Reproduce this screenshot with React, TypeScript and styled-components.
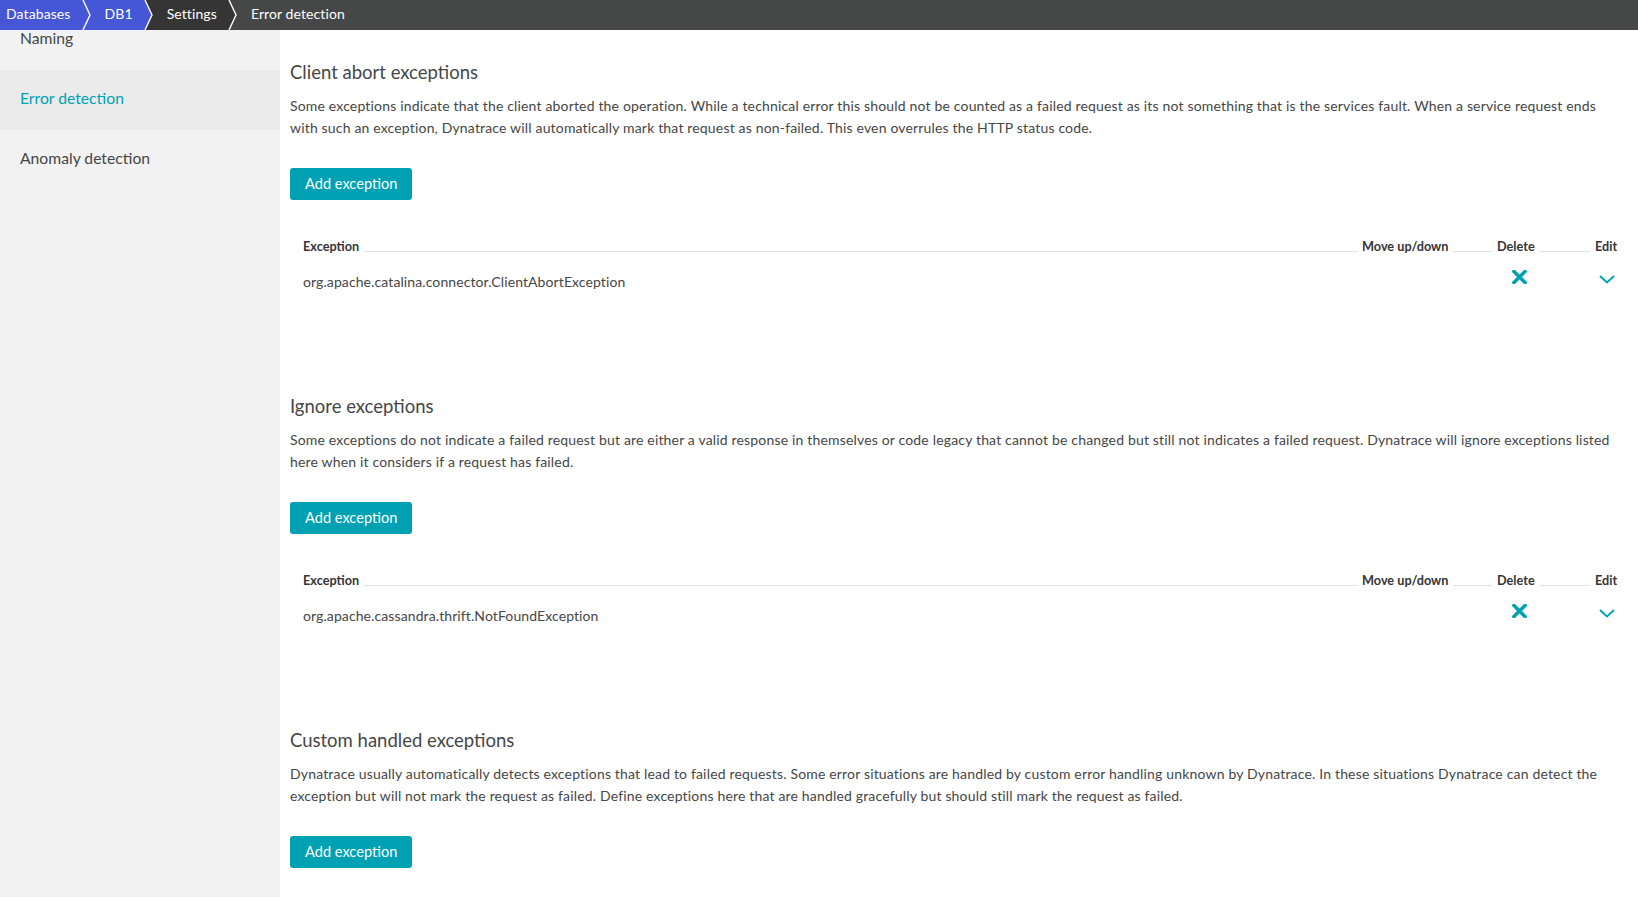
import React from "react";
import styled, { createGlobalStyle } from "styled-components";

const GlobalStyle = createGlobalStyle`
  html, body {
    margin: 0;
    padding: 0;
    height: 100%;
    overflow: hidden;
    background: #ffffff;
    font-family: Lato, "Noto Sans", "Liberation Sans", sans-serif;
    color: #454646;
  }
  * { box-sizing: border-box; }
`;

const TEAL = "#00a1b2";
const BLUE = "#4556d7";
const DARK = "#353535";
const GREY = "#464847";

const Page = styled.div`
  display: flex;
  flex-direction: column;
  height: 100vh;
  overflow: hidden;
`;

const Breadcrumbs = styled.nav`
  display: flex;
  align-items: stretch;
  height: 30px;
  flex-shrink: 0;
  background: ${GREY};
`;

const Crumb = styled.a<{ $bg: string; $first?: boolean }>`
  display: flex;
  align-items: center;
  background: ${(p) => p.$bg};
  color: #ffffff;
  font-size: 14px;
  letter-spacing: 0.1px;
  padding: 0 10px 3px ${(p) => (p.$first ? "6px" : "10px")};
  text-decoration: none;
  white-space: nowrap;
`;

const SepSvg = styled.svg`
  display: block;
  flex-shrink: 0;
`;

function Separator({ left, right }: { left: string; right: string }) {
  return (
    <SepSvg width="14" height="30" viewBox="0 0 14 30">
      <rect x="0" y="0" width="14" height="30" fill={left} />
      <polygon points="2,0 14,0 14,30 2,30 9,15" fill={right} />
      <polyline points="2,0 9,15 2,30" fill="none" stroke="#ffffff" strokeWidth="1.4" />
    </SepSvg>
  );
}

const Body = styled.div`
  display: flex;
  flex: 1;
  min-height: 0;
`;

const Sidebar = styled.aside`
  width: 280px;
  flex-shrink: 0;
  background: #f2f2f2;
  display: flex;
  flex-direction: column;
`;

const SideItem = styled.a<{ $active?: boolean; $cut?: boolean }>`
  display: flex;
  align-items: ${(p) => (p.$cut ? "flex-start" : "center")};
  height: ${(p) => (p.$cut ? "40px" : "60px")};
  padding-left: 20px;
  padding-bottom: ${(p) => (p.$cut ? "0" : "4px")};
  font-size: 15.7px;
  line-height: ${(p) => (p.$cut ? "16px" : "20px")};
  color: ${(p) => (p.$active ? TEAL : "#454646")};
  background: ${(p) => (p.$active ? "#ebebeb" : "transparent")};
  text-decoration: none;
`;

const Main = styled.main`
  flex: 1;
  padding: 0 20px 0 10px;
  overflow: hidden;
`;

const Section = styled.section<{ $last?: boolean }>`
  padding-top: 29px;
  padding-bottom: ${(p) => (p.$last ? "0" : "60px")};
`;

const Title = styled.h2`
  margin: 0;
  font-size: 18.5px;
  line-height: 26px;
  font-weight: 400;
  color: #454646;
`;

const Description = styled.p`
  margin: 10px 0 0;
  font-size: 14px;
  letter-spacing: 0.17px;
  line-height: 22px;
  color: #454646;
`;

const AddButton = styled.button`
  display: block;
  margin-top: 29px;
  height: 32px;
  padding: 0 15px 2px;
  border: none;
  border-radius: 3px;
  background: ${TEAL};
  color: #ffffff;
  font-family: inherit;
  font-size: 14.6px;
  cursor: pointer;
`;

const Table = styled.div`
  margin-top: 34px;
  display: grid;
  grid-template-columns: 1fr 135px 98px 23px;
`;

const HeadCell = styled.div<{ $pad?: number }>`
  display: flex;
  align-items: center;
  height: 24px;
  padding-left: ${(p) => p.$pad ?? 0}px;
  font-size: 12.7px;
  font-weight: 700;
  color: #353535;
  white-space: nowrap;
`;

const HeadLine = styled.span<{ $end?: number }>`
  flex: 1;
  height: 1px;
  margin: 10px ${(p) => p.$end ?? 5}px 0 5px;
  background: #e3e3e3;
`;

const Cell = styled.div<{ $pad?: number; $center?: boolean; $lift?: number }>`
  display: flex;
  align-items: center;
  justify-content: ${(p) => (p.$center ? "center" : "flex-start")};
  height: 46px;
  padding-left: ${(p) => p.$pad ?? 0}px;
  padding-bottom: ${(p) => p.$lift ?? 0}px;
  font-size: 14px;
  letter-spacing: 0.1px;
  color: #454646;
`;

const IconButton = styled.button`
  display: flex;
  align-items: center;
  justify-content: center;
  padding: 0;
  border: none;
  background: transparent;
  cursor: pointer;
`;

function DeleteIcon() {
  return (
    <svg width="15" height="14" viewBox="0 0 15 14">
      <path d="M2 1.5 L13 12.5 M13 1.5 L2 12.5" stroke={TEAL} strokeWidth="3.5" strokeLinecap="square" fill="none" />
    </svg>
  );
}

function ChevronIcon() {
  return (
    <svg width="16" height="9" viewBox="0 0 16 9">
      <polyline points="1,1 8,7.5 15,1" fill="none" stroke={TEAL} strokeWidth="1.9" />
    </svg>
  );
}

type SectionData = {
  title: string;
  text: string;
  rows?: string[];
};

const sections: SectionData[] = [
  {
    title: "Client abort exceptions",
    text:
      "Some exceptions indicate that the client aborted the operation. While a technical error this should not be counted as a failed request as its not something that is the services fault. When a service request ends with such an exception, Dynatrace will automatically mark that request as non-failed. This even overrules the HTTP status code.",
    rows: ["org.apache.catalina.connector.ClientAbortException"],
  },
  {
    title: "Ignore exceptions",
    text:
      "Some exceptions do not indicate a failed request but are either a valid response in themselves or code legacy that cannot be changed but still not indicates a failed request. Dynatrace will ignore exceptions listed here when it considers if a request has failed.",
    rows: ["org.apache.cassandra.thrift.NotFoundException"],
  },
  {
    title: "Custom handled exceptions",
    text:
      "Dynatrace usually automatically detects exceptions that lead to failed requests. Some error situations are handled by custom error handling unknown by Dynatrace. In these situations Dynatrace can detect the exception but will not mark the request as failed. Define exceptions here that are handled gracefully but should still mark the request as failed.",
  },
];

function ExceptionTable({ rows }: { rows: string[] }) {
  return (
    <Table>
      <HeadCell $pad={13}>
        Exception
        <HeadLine $end={4} />
      </HeadCell>
      <HeadCell>
        Move up/down
        <HeadLine />
      </HeadCell>
      <HeadCell>
        Delete
        <HeadLine />
      </HeadCell>
      <HeadCell>Edit</HeadCell>
      {rows.map((r) => (
        <React.Fragment key={r}>
          <Cell $pad={13}>{r}</Cell>
          <Cell />
          <Cell $pad={15} $lift={8}>
            <IconButton aria-label="Delete">
              <DeleteIcon />
            </IconButton>
          </Cell>
          <Cell $center $lift={4}>
            <IconButton aria-label="Edit">
              <ChevronIcon />
            </IconButton>
          </Cell>
        </React.Fragment>
      ))}
    </Table>
  );
}

export default function App() {
  return (
    <>
      <GlobalStyle />
      <Page>
        <Breadcrumbs>
          <Crumb $bg={BLUE} $first>Databases</Crumb>
          <Separator left={BLUE} right={BLUE} />
          <Crumb $bg={BLUE}>DB1</Crumb>
          <Separator left={BLUE} right={DARK} />
          <Crumb $bg={DARK}>Settings</Crumb>
          <Separator left={DARK} right={GREY} />
          <Crumb $bg={GREY}>Error detection</Crumb>
        </Breadcrumbs>
        <Body>
          <Sidebar>
            <SideItem $cut>Naming</SideItem>
            <SideItem $active>Error detection</SideItem>
            <SideItem>Anomaly detection</SideItem>
          </Sidebar>
          <Main>
            {sections.map((s, i) => (
              <Section key={s.title} $last={i === sections.length - 1}>
                <Title>{s.title}</Title>
                <Description>{s.text}</Description>
                <AddButton>Add exception</AddButton>
                {s.rows && <ExceptionTable rows={s.rows} />}
              </Section>
            ))}
          </Main>
        </Body>
      </Page>
    </>
  );
}
